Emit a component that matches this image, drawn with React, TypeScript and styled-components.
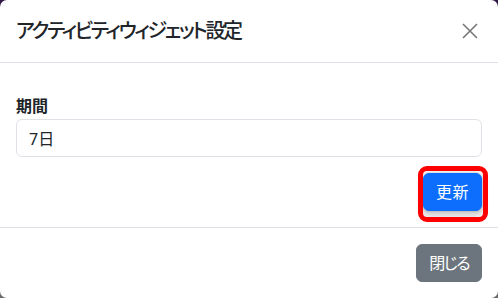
import React from "react";
import styled, { createGlobalStyle } from "styled-components";

const Global = createGlobalStyle`
  html, body {
    margin: 0;
    padding: 0;
    width: 498px;
    height: 298px;
    overflow: hidden;
    background: linear-gradient(180deg, #2f1748 0%, #3c2d55 40%, #6b6b6b 100%);
  }
  * { box-sizing: border-box; }
`;

const font = `"Noto Sans", "Noto Sans CJK JP", sans-serif`;

const Modal = styled.div`
  width: 498px;
  height: 298px;
  background: #fff;
  border-radius: 7px;
  display: flex;
  flex-direction: column;
  font-family: ${font};
  color: #212529;
`;

const Header = styled.div`
  display: flex;
  align-items: center;
  justify-content: space-between;
  padding: 16px;
  height: 63px;
  border-bottom: 1px solid #dee2e6;
`;

const Title = styled.h5`
  margin: 0;
  font-size: 20px;
  line-height: 30px;
  font-weight: 500;
  font-feature-settings: "palt";
  letter-spacing: -2.3px;
`;

const CloseButton = styled.button`
  width: 24px;
  height: 24px;
  padding: 4px;
  border: 0;
  background: transparent;
  display: flex;
  align-items: center;
  justify-content: center;
  cursor: pointer;
`;

const Body = styled.div`
  padding: 31px 16px 16px;
  display: flex;
  flex-direction: column;
  height: 164px;
`;

const Label = styled.label`
  font-size: 16px;
  line-height: 24px;
  font-weight: 700;
  margin-bottom: 1px;
`;

const Input = styled.input`
  height: 38px;
  width: 100%;
  padding: 6px 12px;
  font-family: ${font};
  font-size: 16px;
  color: #212529;
  border: 1px solid #dee2e6;
  border-radius: 6px;
  outline: none;
`;

const Actions = styled.div`
  display: flex;
  justify-content: flex-end;
  margin-top: 16px;
`;

const Button = styled.button<{ $variant: "primary" | "secondary"; $highlight?: boolean }>`
  position: relative;
  height: 38px;
  padding: 6px 12px;
  font-family: ${font};
  font-size: 16px;
  line-height: 24px;
  font-feature-settings: "palt";
  letter-spacing: ${(p) => (p.$variant === "primary" ? "0.5px" : "-1.5px")};
  color: #fff;
  border: 1px solid ${(p) => (p.$variant === "primary" ? "#0d6efd" : "#6c757d")};
  background: ${(p) => (p.$variant === "primary" ? "#0d6efd" : "#6c757d")};
  border-radius: 6px;
  cursor: pointer;
  ${(p) =>
    p.$highlight
      ? `box-shadow: 0 0 2px 1px rgba(0,0,0,0.12), 0 4px 6px 2px rgba(0,0,0,0.18);
  &::after {
    content: "";
    position: absolute;
    left: -6px;
    right: -7px;
    top: -8px;
    bottom: -12px;
    border: 5px solid #ff0000;
    border-radius: 9px;
    pointer-events: none;
  }`
      : ""}
`;

const Footer = styled.div`
  display: flex;
  justify-content: flex-end;
  border-top: 1px solid #dee2e6;
  padding: 16px;
  flex: 1;
  align-items: flex-start;
`;

export default function App() {
  return (
    <>
      <Global />
      <Modal>
        <Header>
          <Title>アクティビティウィジェット設定</Title>
          <CloseButton aria-label="閉じる">
            <svg width="16" height="16" viewBox="0 0 16 16">
              <path d="M1 1L15 15M15 1L1 15" stroke="#787878" strokeWidth="1.6" fill="none" />
            </svg>
          </CloseButton>
        </Header>
        <Body>
          <Label>期間</Label>
          <Input readOnly value="7日" />
          <Actions>
            <Button $variant="primary" $highlight>更新</Button>
          </Actions>
        </Body>
        <Footer>
          <Button $variant="secondary">閉じる</Button>
        </Footer>
      </Modal>
    </>
  );
}
